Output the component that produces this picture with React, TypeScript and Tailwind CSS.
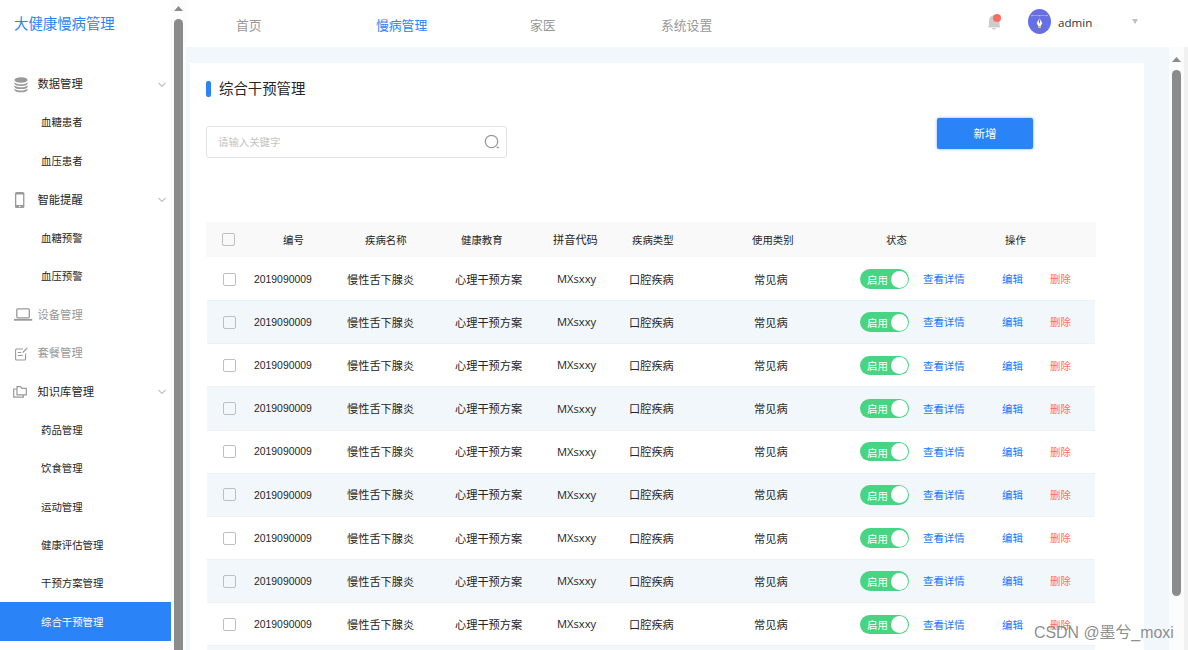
import clsx from "clsx";
import { useState } from "react";

type MenuItem = {
    label: string;
    icon?: React.ReactNode;
    open?: boolean;
    muted?: boolean;
};

const DatabaseIcon = () => (
    <svg width="14" height="16" viewBox="0 0 14 16" fill="#999">
        <ellipse cx="7" cy="3" rx="6.6" ry="2.8" />
        <path d="M.4 5.2c1.2 1.6 3.6 2 6.6 2s5.4-.4 6.6-2v1.6c-.6 1.5-3.4 2.2-6.6 2.2S1 8.3.4 6.8z" />
        <path d="M.4 8.3c1.2 1.6 3.6 2 6.6 2s5.4-.4 6.6-2v1.6c-.6 1.5-3.4 2.2-6.6 2.2S1 11.4.4 9.9z" />
        <path d="M.4 11.5c1.2 1.6 3.6 2 6.6 2s5.4-.4 6.6-2V13c-.6 1.5-3.4 2.3-6.6 2.3S1 14.5.4 13z" />
    </svg>
);

const PhoneIcon = () => (
    <svg className="ml-px" width="10" height="16" viewBox="0 0 10 16">
        <rect width="9.4" height="16" rx="1.6" fill="#999" />
        <rect x="1.3" y="2.5" width="6.8" height="10.5" fill="#fff" />
        <circle cx="4.7" cy="14.5" r=".8" fill="#fff" />
    </svg>
);

const LaptopIcon = () => (
    <svg className="-mt-0.5" width="19" height="13" viewBox="0 0 19 13" fill="none" stroke="#999">
        <rect x="2.8" y=".8" width="12.5" height="9" rx="1" strokeWidth="1.3" />
        <path d="M0 11.800h18.2" strokeWidth="1.8" />
    </svg>
);

const NoteIcon = () => (
    <svg className="ml-px" width="13" height="14" viewBox="0 0 13 14" fill="none" stroke="#999">
        <path d="M8 2H1.600a1 1 0 0 0-1 1v9a1 1 0 0 0 1 1h8a1 1 0 0 0 1-1V6.500M12.300.8 7.800 5.500" strokeWidth="1.100" />
        <path d="M2.800 5.500h3.500M2.800 8.500h5" />
    </svg>
);

const FolderIcon = () => (
    <svg className="-mt-0.5 -ml-px" width="14" height="12" viewBox="0 0 14 12" fill="none" stroke="#999" strokeWidth="1.200">
        <path d="M4 .7h3.500l1.300 1.600h4.500v6.500H4z" />
        <path d="M4 3H.7v8.200h9.600V9" />
    </svg>
);

const BellIcon = () => (
    <svg width="14" height="16" viewBox="0 0 14 16">
        <path d="M1 13.200V6.500a5.300 5.300 0 0 1 10.600 0v6.700z" fill="#ccc" />
        <path d="M0 12.300h12v1H0zM4 14h4a2 1.600 0 0 1-4 0z" fill="#ccc" />
        <circle cx="9" cy="4" r="4" fill="#ff6b62" />
    </svg>
);

const Avatar = () => (
    <svg width="23" height="25" viewBox="0 0 23 25">
        <ellipse cx="11.500" cy="12.500" rx="11.500" ry="12.500" fill="#6670e6" />
        <path d="M4 6.500h15" stroke="#c3aab8" strokeWidth=".7" />
        <path d="M3.300 6h1.400v1.200H3.300zM10.800 6h1.400v1.200h-1.400zM18.300 6h1.400v1.200h-1.400z" fill="#d9b77d" />
        <path d="M11.500 9.500 8.700 14l1.600 3.300h2.400l1.600-3.300z" fill="#fff" />
        <path d="M11.500 10.500v3.700" stroke="#6670e6" strokeWidth="1" />
        <path d="M10 17.300h3V19h-3z" fill="#e8c16b" />
    </svg>
);

const menu: MenuItem[] = [
    { label: "数据管理", icon: <DatabaseIcon />, open: true },
    { label: "血糖患者" },
    { label: "血压患者" },
    { label: "智能提醒", icon: <PhoneIcon />, open: true },
    { label: "血糖预警" },
    { label: "血压预警" },
    { label: "设备管理", icon: <LaptopIcon />, muted: true },
    { label: "套餐管理", icon: <NoteIcon />, muted: true },
    { label: "知识库管理", icon: <FolderIcon />, open: true },
    { label: "药品管理" },
    { label: "饮食管理" },
    { label: "运动管理" },
    { label: "健康评估管理" },
    { label: "干预方案管理" },
    { label: "综合干预管理" },
];

const rows = Array.from({ length: 9 }, () => ({
    code: "2019090009",
    name: "慢性舌下腺炎",
    plan: "心理干预方案",
    pinyin: "MXsxxy",
    type: "口腔疾病",
    category: "常见病",
}));

const Sidebar = () => {
    const [active, setActive] = useState("综合干预管理");

    return (
        <aside className="flex w-[186px] shrink-0 bg-white">
            <div className="w-[171px]">
                <h1 className="h-16 pt-4 pl-3.5 text-[14.4px] leading-4 text-[#2a84f8]">
                    大健康慢病管理
                </h1>
                {menu.map((item) => (
                    <div
                        key={item.label}
                        onClick={() => setActive(item.label)}
                        className={clsx(
                            "flex cursor-pointer items-center pt-[3px]",
                            item.icon ? "pl-3.5 text-[11.3px]" : "pl-[41px] text-[10.4px]",
                            item.label === active
                                ? "h-[39px] bg-[#2a84f8] text-white"
                                : "h-[38.43px]",
                            item.muted && "text-[#999]"
                        )}>
                        {item.icon && (
                            <span className="flex w-[23.5px] shrink-0 pt-px">{item.icon}</span>
                        )}
                        <span>{item.label}</span>
                        {item.open && (
                            <svg className="mr-[5px] ml-auto" width="8" height="6" viewBox="0 0 8 6" fill="none" stroke="#c0c0c0" strokeWidth="1.2">
                                <path d="m.4.8 3.6 3.7L7.6.8" />
                            </svg>
                        )}
                    </div>
                ))}
            </div>
            <div className="flex w-[15px] flex-col items-center bg-[#fcfcfc] pt-1.5">
                <ScrollArrow />
                <div className="mt-2 w-[9px] flex-1 rounded-t-full bg-[#8b8b8b]" />
            </div>
        </aside>
    );
};

const ScrollArrow = () => (
    <svg className="shrink-0" width="9" height="5" viewBox="0 0 9 5">
        <path d="M4.5 0 9 5H0z" fill="#8b8b8b" />
    </svg>
);

const Header = () => (
    <header className="flex h-[47px] shrink-0 items-center bg-white text-[12.8px] text-[#999]">
        <nav className="flex flex-1 pt-1 pl-[50px]">
            <a className="w-[140px]">首页</a>
            <a className="w-[154px] text-[#2a84f8]">慢病管理</a>
            <a className="w-[131px]">家医</a>
            <a>系统设置</a>
        </nav>
        <div className="flex h-full w-[200px] items-center pb-1">
            <BellIcon />
            <span className="ml-[26px]">
                <Avatar />
            </span>
            <span className="mt-[3px] ml-[7px] w-[74px] text-[11.6px] text-[#333]">admin</span>
            <svg width="6" height="5" viewBox="0 0 6 5">
                <path d="M0 0h6L3 5z" fill="#c0c0c0" />
            </svg>
        </div>
    </header>
);

const Checkbox = () => (
    <span className="block size-[13px] rounded-[2px] border border-[#bfbfbf]" />
);

const Switch = () => {
    const [on, setOn] = useState(true);

    return (
        <button
            onClick={() => setOn(!on)}
            className={clsx(
                "flex h-[19.5px] w-[49px] items-center rounded-full pr-px pl-[7px] text-[10.4px] leading-none text-white",
                on ? "bg-[#47d583]" : "flex-row-reverse bg-[#ccc]"
            )}>
            <span className="flex-1 pt-0.5 text-left">{on ? "启用" : "停用"}</span>
            <span className="size-[17px] rounded-full bg-white" />
        </button>
    );
};

const DiseaseTable = () => (
    <div className="w-[890px]">
        <div className="grid h-[35px] grid-cols-[60px_83px_96px_91px_80px_120px_134px_119px_1fr] items-center bg-[#f9f9f9] pl-4 text-[10.4px] *:not-first:pt-0.5">
            <Checkbox />
            <span className="pl-px">编号</span>
            <span>疾病名称</span>
            <span>健康教育</span>
            <span className="pl-px text-[11.2px]">拼音代码</span>
            <span>疾病类型</span>
            <span>使用类别</span>
            <span>状态</span>
            <span>操作</span>
        </div>
        {rows.map((row, i) => (
            <div
                key={i}
                className={clsx(
                    "mx-px grid h-[43.17px] grid-cols-[30px_94px_108px_102px_72px_125px_106px_63px_79px_47px_1fr] items-center border-t pl-4 text-[11.2px]",
                    i === 0 ? "border-transparent" : "border-[#eef1f4]",
                    i % 2 === 1 && "bg-[#f2f7fb]"
                )}>
                <Checkbox />
                <span className="pt-px pl-px font-['Liberation_Sans'] text-[10.4px]">{row.code}</span>
                <span className="pt-0.5">{row.name}</span>
                <span className="pt-0.5">{row.plan}</span>
                <span className="pt-px">{row.pinyin}</span>
                <span className="pt-0.5">{row.type}</span>
                <span className="pt-0.5">{row.category}</span>
                <Switch />
                <a className="pt-0.5 text-[10.4px] text-[#1677ff]">查看详情</a>
                <a className="pt-0.5 text-[10.4px] text-[#1677ff]">编辑</a>
                <a className="pt-0.5 pl-px text-[10.4px] text-[#ff6b62]">删除</a>
            </div>
        ))}
        <div className="mx-px h-10 border-t border-[#eef1f4] bg-[#f2f7fb]" />
    </div>
);

const App: React.FC = () => (
    <div className="relative flex h-[650px] w-[1188px] overflow-hidden bg-white font-['Open_Sans','Noto_Sans_CJK_SC',sans-serif] text-[#262626]">
        <Sidebar />
        <div className="flex flex-1 flex-col">
            <Header />
            <div className="flex min-h-0 flex-1 bg-[#f2f7fb] pl-1">
                <main className="mt-4 w-[954px] shrink-0 bg-white pl-4">
                    <div className="flex h-[55px] items-center pb-[3px]">
                        <span className="h-4 w-[5px] rounded-[2px] bg-[#2a84f8]" />
                        <h2 className="ml-2 text-[14.4px]">综合干预管理</h2>
                    </div>
                    <div className="flex h-[104px] items-start">
                        <label className="mt-2 flex h-8 w-[301px] items-center rounded-[3px] border border-[#e2e2e2] pr-1.5 pl-[11px]">
                            <input
                                placeholder="请输入关键字"
                                className="min-w-0 flex-1 pt-0.5 text-[10.4px] outline-none placeholder:text-[#c4c4c4]"
                            />
                            <svg width="16" height="16" viewBox="0 0 16 16" fill="none" stroke="#999" strokeWidth="1.3">
                                <circle cx="7.5" cy="7.5" r="6.2" />
                                <path d="m13 12.8 1.5 1.3" strokeWidth="1.6" />
                            </svg>
                        </label>
                        <button className="ml-[430px] h-[31px] w-24 rounded-[2px] bg-[#2a84f8] text-[11.5px] text-white shadow-[0_0_3px_#2a84f8aa]">
                            新增
                        </button>
                    </div>
                    <DiseaseTable />
                </main>
                <div className="ml-[25px] flex w-[15px] flex-col items-center bg-[#fcfcfc] pt-2.5">
                    <ScrollArrow />
                    <div className="mt-2 h-[526px] w-[9px] rounded-full bg-[#8b8b8b]" />
                </div>
                <div className="flex-1 bg-[#f1f1f1]" />
            </div>
        </div>
        <span className="absolute top-[621px] left-[1034px] font-['Liberation_Sans','Noto_Sans_CJK_SC',sans-serif] text-[15.9px] whitespace-nowrap text-[#808080]/90">
            CSDN @墨兮_moxi
        </span>
    </div>
);

export default App;
